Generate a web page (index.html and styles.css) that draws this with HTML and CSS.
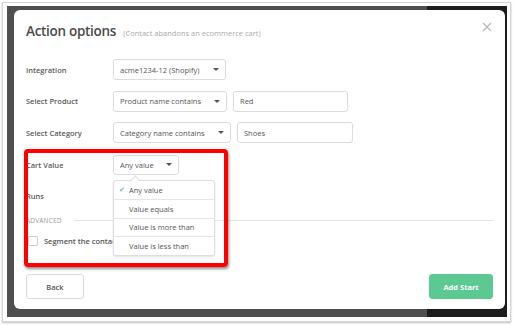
FILE: index.html
```html
<!DOCTYPE html>
<html>
<head>
    <title>Action options</title>
    <link rel="stylesheet" href="styles.css">
</head>
<body>
    <div class="frame">
        <div class="backdrop">
            <div class="modal">
                <div class="modal-head">
                    <h1>Action options <small>(Contact abandons an ecommerce cart)</small></h1>
                    <span class="close">
                        <svg width="10" height="10" viewBox="0 0 10 10"><path d="M1 1L9 9M9 1L1 9" stroke="#b8b8b8" stroke-width="1.3"/></svg>
                    </span>
                </div>

                <div class="form">
                    <div class="row">
                        <label>Integration</label>
                        <div class="select w-int">acme1234-12 (Shopify)<i class="caret"></i></div>
                    </div>
                    <div class="row">
                        <label>Select Product</label>
                        <div class="select w-prod">Product name contains<i class="caret"></i></div>
                        <div class="input w-prod-in">Red</div>
                    </div>
                    <div class="row">
                        <label>Select Category</label>
                        <div class="select w-cat">Category name contains<i class="caret"></i></div>
                        <div class="input w-cat-in">Shoes</div>
                    </div>
                    <div class="row">
                        <label>Cart Value</label>
                        <div class="select-wrap">
                            <div class="select w-cart">Any value<i class="caret"></i></div>
                            <ul class="menu">
                                <li class="checked"><span class="tick">&#10004;</span>Any value</li>
                                <li>Value equals</li>
                                <li>Value is more than</li>
                                <li>Value is less than</li>
                            </ul>
                        </div>
                    </div>
                    <div class="row">
                        <label>Runs</label>
                    </div>
                    <div class="advanced">
                        <span>ADVANCED</span>
                        <div class="rule"></div>
                    </div>
                    <div class="check-row">
                        <span class="checkbox"></span>
                        <span class="check-label">Segment the contact into a list</span>
                    </div>
                </div>

                <div class="modal-foot">
                    <button class="btn">Back</button>
                    <button class="btn primary">Add Start</button>
                </div>

                <div class="highlight"></div>
            </div>
        </div>
    </div>
</body>
</html>
```

FILE: styles.css
```css
html, body {
    margin: 0;
    padding: 0;
    background: #fff;
}
body {
    width: 514px;
    height: 325px;
    padding: 2px 3px 0 2px;
    box-sizing: border-box;
    font-family: "Open Sans", "Liberation Sans", sans-serif;
    color: #555;
}
.frame {
    border: 1px solid #d4d4d4;
    background: #fff;
    padding: 3px 3px 4px 4px;
    box-shadow: 0 1px 2px rgba(0, 0, 0, 0.25);
}
.backdrop {
    background: linear-gradient(to right, #4f4f4f 0, #4f4f4f 84%, #1d1d1d 84%);
    padding: 4px 2px 8px 7px;
}
.modal {
    position: relative;
    background: #fff;
    border-radius: 6px;
    height: 299px;
    box-sizing: border-box;
    padding: 0 12px 10px 12px;
    display: flex;
    flex-direction: column;
}
.modal-head {
    height: 42px;
    display: flex;
    align-items: center;
    justify-content: space-between;
}
.modal-head h1 {
    margin: 0;
    font-size: 13.5px;
    font-weight: 600;
    color: #4a4a4a;
    letter-spacing: -0.3px;
}
.modal-head small {
    font-size: 7.5px;
    font-weight: 400;
    color: #a8a8a8;
    margin-left: 4px;
    letter-spacing: 0;
}
.close {
    display: flex;
    margin-right: 1px;
    margin-top: -8px;
}
.form {
    margin-top: 7px;
    display: flex;
    flex-direction: column;
    gap: 10.7px;
}
.row {
    display: flex;
    align-items: center;
    height: 21px;
    gap: 6px;
}
.row label {
    width: 81px;
    font-size: 7.5px;
    font-weight: 600;
    color: #5a5a5a;
}
.select, .input {
    height: 21px;
    box-sizing: border-box;
    border: 1px solid #dcdcdc;
    border-radius: 3px;
    font-size: 7.5px;
    display: flex;
    align-items: center;
    padding: 0 6px;
    color: #555;
}
.select {
    justify-content: space-between;
}
.caret {
    width: 0;
    height: 0;
    border-left: 3px solid transparent;
    border-right: 3px solid transparent;
    border-top: 3px solid #555;
}
.w-int { width: 113px; }
.w-prod { width: 114px; }
.w-prod-in { width: 115px; }
.w-cat { width: 118px; }
.w-cat-in { width: 116px; }
.w-cart { width: 66px; height: 20px; }
.select-wrap {
    position: relative;
}
.menu {
    position: absolute;
    top: 25px;
    left: 0;
    width: 100px;
    margin: 0;
    padding: 0;
    list-style: none;
    background: #fff;
    border: 1px solid #dedede;
    border-radius: 3px;
    box-shadow: 0 1px 2px rgba(0, 0, 0, 0.12);
    z-index: 2;
}
.menu::before {
    content: "";
    position: absolute;
    top: -4px;
    left: 18px;
    width: 6px;
    height: 6px;
    background: #fff;
    border-left: 1px solid #dedede;
    border-top: 1px solid #dedede;
    transform: rotate(45deg);
}
.menu li {
    height: 18.5px;
    display: flex;
    align-items: center;
    padding-left: 15px;
    font-size: 7.5px;
    color: #555;
    border-top: 1px solid #e6e6e6;
    box-sizing: border-box;
}
.menu li:first-child {
    border-top: none;
}
.menu li.checked {
    padding-left: 5px;
}
.tick {
    color: #5cc891;
    font-size: 7px;
    width: 10px;
}
.advanced {
    display: flex;
    align-items: center;
    gap: 12px;
    height: 10px;
    margin-top: -2px;
}
.advanced span {
    font-size: 6.5px;
    color: #999;
    letter-spacing: 0.2px;
}
.advanced .rule {
    flex: 1;
    height: 1px;
    background: #e4e4e4;
}
.check-row {
    display: flex;
    align-items: center;
    gap: 6px;
    height: 10px;
    margin-top: 0;
    font-size: 7.5px;
    font-weight: 600;
    color: #555;
    padding-left: 2px;
}
.checkbox {
    width: 8px;
    height: 8px;
    border: 1px solid #ccc;
    border-radius: 1px;
}
.check-label {
    width: 69px;
    overflow: hidden;
    white-space: nowrap;
}
.modal-foot {
    margin-top: auto;
    display: flex;
    justify-content: space-between;
}
.btn {
    height: 25px;
    width: 58px;
    border: 1px solid #dcdcdc;
    border-radius: 3px;
    background: #fff;
    font-family: "Open Sans", "Liberation Sans", sans-serif;
    font-size: 7.5px;
    font-weight: 600;
    color: #555;
    padding: 0;
}
.btn.primary {
    width: 64px;
    background: #5dc992;
    border-color: #5dc992;
    color: #fff;
    font-weight: 700;
}
.highlight {
    position: absolute;
    left: 10px;
    top: 139px;
    width: 204px;
    height: 118px;
    box-sizing: border-box;
    border: 4px solid #ff0000;
    border-radius: 4px;
    box-shadow: 1px 2px 3px rgba(0, 0, 0, 0.45);
    z-index: 3;
}
```
